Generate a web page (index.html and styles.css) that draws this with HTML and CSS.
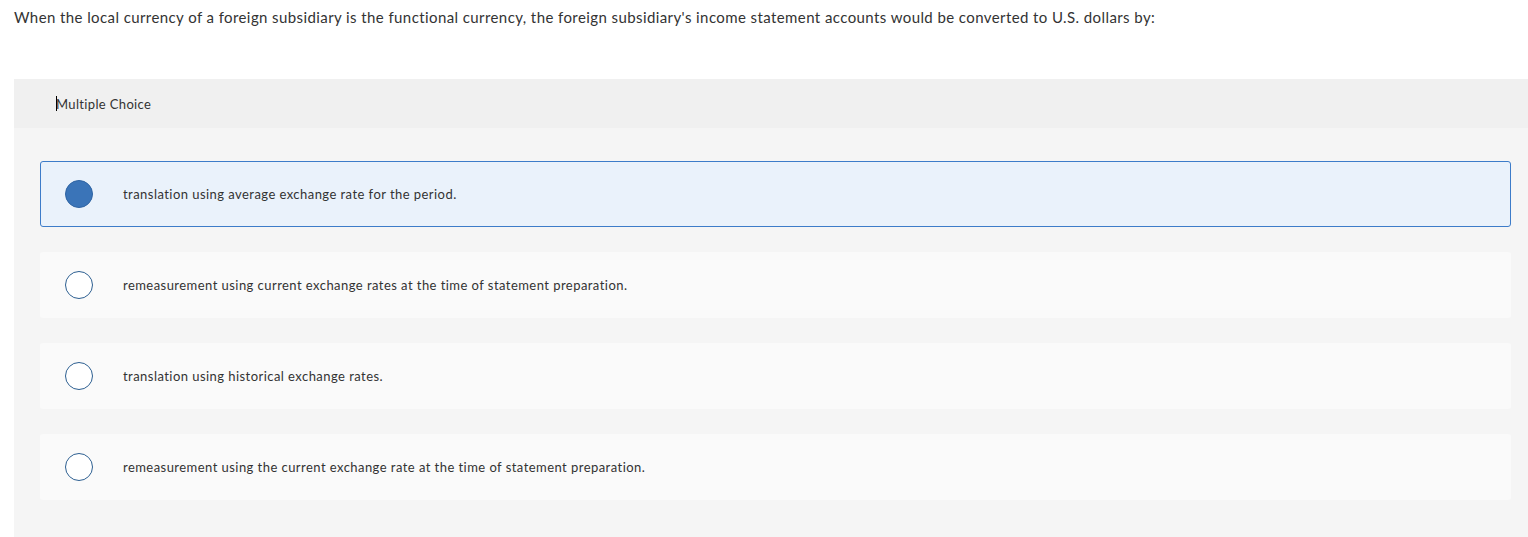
FILE: index.html
```html
<!DOCTYPE html>
<html>
<head>
<meta charset="utf-8">
<link rel="stylesheet" href="styles.css">
</head>
<body>
<p class="question">When the local currency of a foreign subsidiary is the functional currency, the foreign subsidiary's income statement accounts would be converted to U.S. dollars by:</p>
<div class="panel">
  <div class="panel-head"><span class="caret"></span>Multiple Choice</div>
  <div class="choices">
    <div class="choice selected"><span class="radio"></span><span class="label">translation using average exchange rate for the period.</span></div>
    <div class="choice"><span class="radio"></span><span class="label">remeasurement using current exchange rates at the time of statement preparation.</span></div>
    <div class="choice"><span class="radio"></span><span class="label">translation using historical exchange rates.</span></div>
    <div class="choice"><span class="radio"></span><span class="label">remeasurement using the current exchange rate at the time of statement preparation.</span></div>
  </div>
</div>
</body>
</html>
```
FILE: styles.css
```css
html, body {
  margin: 0;
  padding: 0;
  background: #ffffff;
  font-family: "Lato", "Open Sans", sans-serif;
  color: #333333;
  overflow: hidden;
}
.question {
  margin: 0;
  padding: 7px 14px 0 14px;
  font-size: 15px;
  line-height: 20px;
  height: 72px;
  color: #333;
  letter-spacing: 0.41px;
}
.panel {
  margin-left: 14px;
  margin-right: -9px;
  background: #f5f5f5;
  min-height: 458px;
}
.panel-head {
  background: #f0f0f0;
  height: 49px;
  padding-left: 42px;
  display: flex;
  align-items: center;
  font-size: 13px;
  color: #333;
  letter-spacing: 0.35px;
}
.caret {
  display: inline-block;
  width: 1px;
  height: 15px;
  background: #000;
  margin-right: -1px;
}
.choices {
  padding: 33px 26px 0 26px;
  display: flex;
  flex-direction: column;
  gap: 25px;
}
.choice {
  height: 66px;
  box-sizing: border-box;
  background: #fafafa;
  border: 1px solid transparent;
  border-radius: 3px;
  display: flex;
  align-items: center;
  padding-left: 24px;
  font-size: 13px;
  color: #333;
  letter-spacing: 0.45px;
}
.choice.selected {
  background: #eaf2fb;
  border-color: #3d7cc9;
}
.radio {
  width: 28px;
  height: 28px;
  box-sizing: border-box;
  border-radius: 50%;
  border: 1.5px solid #2d5f91;
  background: #ffffff;
  flex: none;
}
.selected .radio {
  background: #3a74b8;
  border-color: #2f64a3;
}
.label {
  margin-left: 30px;
}
```
